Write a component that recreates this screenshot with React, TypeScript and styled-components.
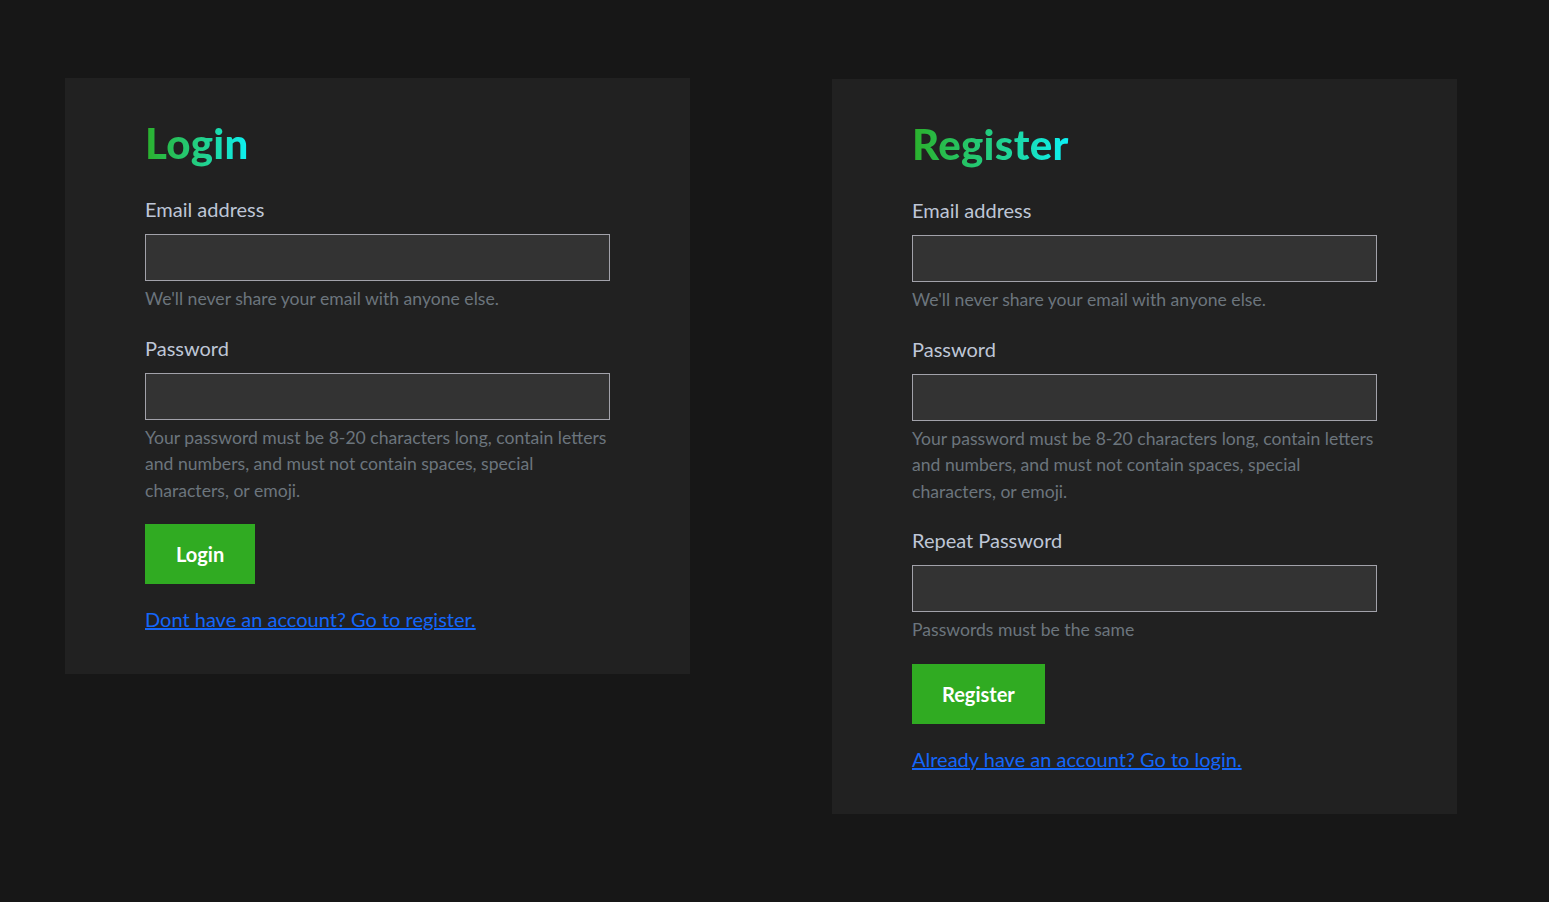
import React from 'react';
import styled, { createGlobalStyle } from 'styled-components';

const GlobalStyle = createGlobalStyle`
  html, body {
    margin: 0;
    padding: 0;
    background: #171717;
  }
  body {
    font-family: Lato, "Open Sans", sans-serif;
  }
`;

const Page = styled.div`
  min-height: 902px;
  display: flex;
  align-items: flex-start;
  gap: 142px;
  padding: 78px 0 0 65px;
  box-sizing: border-box;
`;

const Card = styled.div<{ $offset?: number }>`
  width: 625px;
  box-sizing: border-box;
  background: #212121;
  padding: 40px 80px 40px;
  margin-top: ${(p) => p.$offset || 0}px;
`;

const Title = styled.h1`
  margin: 0 0 26px;
  font-size: 42px;
  line-height: 50px;
  font-weight: 900;
  letter-spacing: 0.3px;
  background: linear-gradient(90deg, #2bb02b 0%, #22d08a 55%, #0cf2f6 100%);
  -webkit-background-clip: text;
  background-clip: text;
  color: transparent;
  display: inline-block;
`;

const Group = styled.div`
  margin-bottom: 20px;
`;

const Label = styled.label`
  display: block;
  font-size: 20px;
  line-height: 30px;
  color: #bec6d6;
  margin-bottom: 10px;
`;

const Input = styled.input`
  display: block;
  width: 100%;
  height: 47px;
  box-sizing: border-box;
  background: #333333;
  border: 1px solid #a2a2aa;
  border-radius: 0;
  outline: none;
  color: #ddd;
  font-size: 18px;
  padding: 0 12px;
`;

const Hint = styled.div`
  margin-top: 5px;
  font-size: 17.6px;
  line-height: 26.5px;
  color: #6c757d;
`;

const Button = styled.button<{ $pad: number }>`
  display: block;
  height: 60px;
  padding: 0 ${(p) => p.$pad}px;
  border: none;
  border-radius: 0;
  background: #30ab22;
  color: #ffffff;
  font-family: Lato, "Open Sans", sans-serif;
  font-size: 20px;
  font-weight: 700;
  cursor: pointer;
`;

const SwitchLink = styled.a`
  display: inline-block;
  margin-top: 20px;
  font-size: 20px;
  line-height: 30px;
  color: #1466fa;
  text-decoration: underline;
  cursor: pointer;
`;

const Field = ({ label, type, hint }: { label: string; type: string; hint: string }) => (
  <Group>
    <Label>{label}</Label>
    <Input type={type} />
    <Hint>{hint}</Hint>
  </Group>
);

const passwordHint =
  'Your password must be 8-20 characters long, contain letters and numbers, and must not contain spaces, special characters, or emoji.';

const App = () => {
  return (
    <>
      <GlobalStyle />
      <Page>
        <Card>
          <Title>Login</Title>
          <Field label="Email address" type="email" hint="We'll never share your email with anyone else." />
          <Field label="Password" type="password" hint={passwordHint} />
          <Button $pad={31}>Login</Button>
          <SwitchLink>Dont have an account? Go to register.</SwitchLink>
        </Card>
        <Card $offset={1}>
          <Title>Register</Title>
          <Field label="Email address" type="email" hint="We'll never share your email with anyone else." />
          <Field label="Password" type="password" hint={passwordHint} />
          <Field label="Repeat Password" type="password" hint="Passwords must be the same" />
          <Button $pad={30}>Register</Button>
          <SwitchLink>Already have an account? Go to login.</SwitchLink>
        </Card>
      </Page>
    </>
  );
};

export default App;
